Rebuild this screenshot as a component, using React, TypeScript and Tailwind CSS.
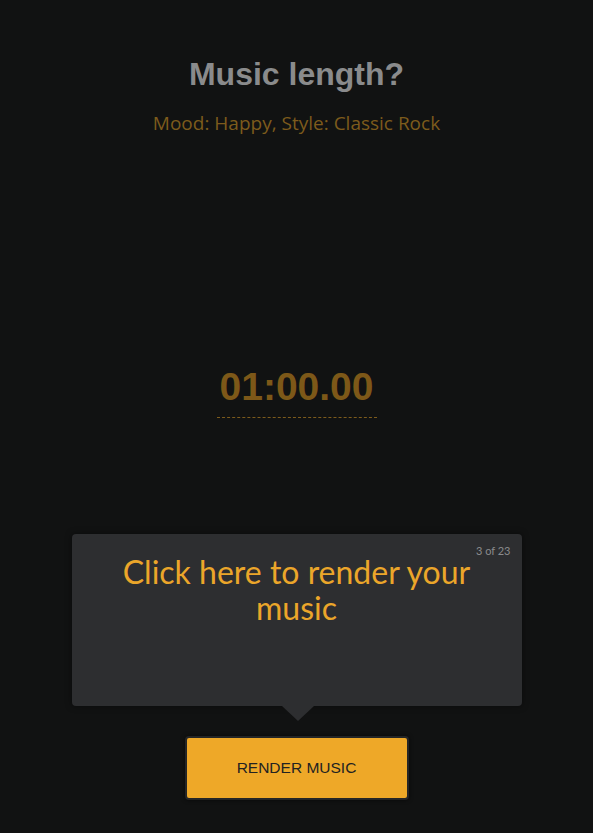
export default function App() {
  return (
    <div className="flex min-h-[833px] w-full flex-col items-center bg-[#111212] font-['Liberation_Sans',sans-serif]">
      <h1 className="mt-[55px] text-[32px] font-bold leading-[38px] text-[#8a8b8c]">
        Music length?
      </h1>
      <p className="mt-[17px] font-['Open_Sans',sans-serif] text-[19px] leading-[26px] text-[#7d5b1c]">
        Mood: Happy, Style: Classic Rock
      </p>

      <div className="mt-[229px] flex flex-col items-center">
        <div className="text-[39px] font-bold leading-[44px] text-[#7d5818]">
          01:00.00
        </div>
        <div className="mt-[8px] w-[160px] border-t border-dashed border-[#7d5b1c]" />
      </div>

      <div className="relative mt-[116px] h-[172px] w-[450px] rounded-[4px] bg-[#2d2e30] shadow-[0_0_6px_rgba(0,0,0,0.5)]">
        <span className="absolute right-[11px] top-[9px] font-['Lato',sans-serif] text-[11px] text-[#8a8b8c]">
          3 of 23
        </span>
        <p className="px-[30px] pt-[20px] text-center font-['Lato',sans-serif] text-[32px] leading-[36px] text-[#eba62a]">
          Click here to render your music
        </p>
        <div className="absolute left-[210px] top-full h-0 w-0 border-x-[16px] border-t-[15px] border-x-transparent border-t-[#2d2e30]" />
      </div>

      <button
        type="button"
        className="mt-[30px] flex h-[64px] w-[224px] items-center justify-center rounded-[4px] border-[2px] border-[#242526] bg-[#eea828] text-[15.5px] text-[#222222] shadow-[0_0_4px_rgba(0,0,0,0.6)]"
      >
        RENDER MUSIC
      </button>
    </div>
  );
}
